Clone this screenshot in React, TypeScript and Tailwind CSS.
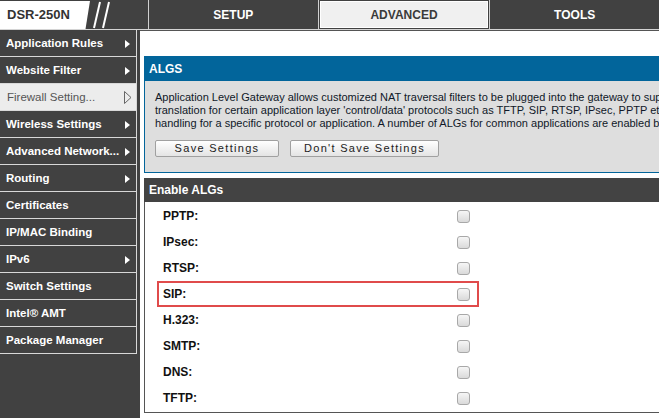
import React from 'react'

const menu = [
  { label: 'Application Rules', arrow: true },
  { label: 'Website Filter', arrow: true },
  { label: 'Firewall Setting...', arrow: true, active: true },
  { label: 'Wireless Settings', arrow: true },
  { label: 'Advanced Network...', arrow: true },
  { label: 'Routing', arrow: true },
  { label: 'Certificates' },
  { label: 'IP/MAC Binding' },
  { label: 'IPv6', arrow: true },
  { label: 'Switch Settings' },
  { label: 'Intel® AMT' },
  { label: 'Package Manager' },
]

const algs = ['PPTP:', 'IPsec:', 'RTSP:', 'SIP:', 'H.323:', 'SMTP:', 'DNS:', 'TFTP:']

function Arrow({ outline }: { outline?: boolean }) {
  if (outline) {
    return (
      <svg width="8" height="13" viewBox="0 0 8 13" className="shrink-0">
        <path d="M0.5 0.5 L7 6.5 L0.5 12.5 Z" fill="none" stroke="#666" strokeWidth="1" />
      </svg>
    )
  }
  return (
    <svg width="5" height="8" viewBox="0 0 5 8" className="shrink-0">
      <path d="M0 0 L5 4 L0 8 Z" fill="#fff" />
    </svg>
  )
}

function Checkbox() {
  return (
    <div className="w-[13px] h-[13px] rounded-[3px] border border-[#a8a8a8] bg-gradient-to-b from-[#f6f6f6] to-[#dadada]" />
  )
}

export default function App() {
  return (
    <div className="w-[659px] h-[418px] overflow-hidden bg-[#414141] font-['Liberation_Sans',Arial,sans-serif]">
      {/* top bar */}
      <header className="flex h-[30px] border-b border-[#d4d4d4]">
        <div className="flex w-[148px] shrink-0">
          <div className="w-[90px] h-[28px] mt-[1px] bg-white flex items-center pl-[7px] [clip-path:polygon(0_0,100%_0,95%_100%,0_100%)]">
            <span className="text-[13px] font-bold text-[#333]">DSR-250N</span>
          </div>
          <svg width="58" height="29" viewBox="0 0 58 29">
            <line x1="4" y1="28" x2="10" y2="2" stroke="#fff" strokeWidth="2" />
            <line x1="13" y1="28" x2="19" y2="2" stroke="#fff" strokeWidth="2" />
          </svg>
        </div>
        <div className="flex flex-1 text-[12px] font-bold">
          <div className="flex-1 border-l border-[#d0d0d0] flex items-center justify-center text-white">SETUP</div>
          <div className="flex-1 border-l border-[#d0d0d0] p-[1px]">
            <div className="h-full bg-[#f0f0f0] border border-white flex items-center justify-center text-[#3a3a3a]">ADVANCED</div>
          </div>
          <div className="flex-1 border-l border-[#d0d0d0] flex items-center justify-center text-white">TOOLS</div>
        </div>
      </header>

      <div className="flex h-[388px]">
        {/* sidebar */}
        <nav className="w-[140px] shrink-0">
          {menu.map((m) => (
            <div
              key={m.label}
              className={
                m.active
                  ? 'w-[137px] h-[27px] border-r border-b border-[#d8d8d8] bg-[#ececec] flex items-center justify-between pl-[7px] pr-[4px] pt-[1px] text-[11.5px] text-[#555]'
                  : 'w-[137px] h-[27px] border-r border-b border-[#d8d8d8] flex items-center justify-between pl-[6px] pr-[6px] pt-[1px] text-[11.5px] font-bold text-white'
              }
            >
              <span className="whitespace-nowrap">{m.label}</span>
              {m.arrow && <Arrow outline={m.active} />}
            </div>
          ))}
        </nav>

        {/* content */}
        <main className="flex-1 bg-white border-t border-[#555] overflow-hidden pl-[4px] pt-[25px]">
          <section className="w-[560px]">
            <div className="h-[25px] bg-[#02659b] flex items-center pl-[5px] text-[12px] font-bold text-white">ALGS</div>
            <div className="bg-[#dedede] border-l border-b border-[#02659b] pl-[10px] pt-[10px] pb-[15px]">
              <p className="text-[11px] leading-[13px] text-[#101828] whitespace-nowrap">
                Application Level Gateway allows customized NAT traversal filters to be plugged into the gateway to support address and port
                <br />
                translation for certain application layer 'control/data' protocols such as TFTP, SIP, RTSP, IPsec, PPTP etc. An ALG provides special
                <br />
                handling for a specific protocol or application. A number of ALGs for common applications are enabled by default.
              </p>
              <div className="flex gap-[11px] mt-[10px]">
                <button className="w-[124px] h-[17px] rounded-[2px] border border-[#a0a0a0] bg-gradient-to-b from-white to-[#e4e4e4] text-[11px] tracking-[1.3px] text-[#222] leading-none">
                  Save Settings
                </button>
                <button className="w-[149px] h-[17px] rounded-[2px] border border-[#a0a0a0] bg-gradient-to-b from-white to-[#e4e4e4] text-[11px] tracking-[1.3px] text-[#222] leading-none">
                  Don't Save Settings
                </button>
              </div>
            </div>
          </section>

          <section className="w-[560px] mt-[5px]">
            <div className="h-[24px] bg-[#434343] flex items-center pl-[5px] text-[12px] font-bold text-white">Enable ALGs</div>
            <div className="bg-white border-l border-b border-[#555] pt-[1px] pb-[1px]">
              {algs.map((a) => (
                <div
                  key={a}
                  className={
                    a === 'SIP:'
                      ? 'ml-[12px] w-[322px] h-[26px] border-2 border-[#e04b4b] flex items-center pl-[4px]'
                      : 'ml-[12px] w-[322px] h-[26px] border-2 border-transparent flex items-center pl-[4px]'
                  }
                >
                  <span className="w-[294px] text-[12px] font-bold text-[#111]">{a}</span>
                  <Checkbox />
                </div>
              ))}
            </div>
          </section>
        </main>
      </div>
    </div>
  )
}
